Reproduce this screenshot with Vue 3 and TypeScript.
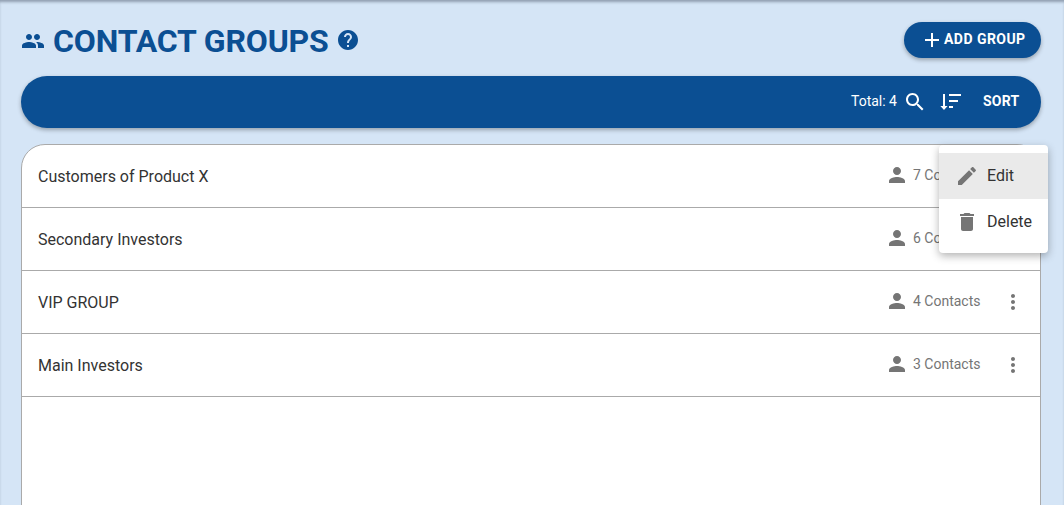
<script setup lang="ts">
interface Group { name: string; count: number }
const groups: Group[] = [
  { name: 'Customers of Product X', count: 7 },
  { name: 'Secondary Investors', count: 6 },
  { name: 'VIP GROUP', count: 4 },
  { name: 'Main Investors', count: 3 },
]
</script>

<template>
  <div class="page">
    <header class="head">
      <div class="title-wrap">
        <svg class="people" viewBox="0 0 24 24" width="24" height="24"><path fill="currentColor" d="M16 11c1.66 0 2.99-1.34 2.99-3S17.66 5 16 5c-1.66 0-3 1.34-3 3s1.34 3 3 3zm-8 0c1.66 0 2.99-1.34 2.99-3S9.66 5 8 5C6.34 5 5 6.34 5 8s1.34 3 3 3zm0 2c-2.33 0-7 1.17-7 3.5V19h14v-2.5c0-2.33-4.67-3.5-7-3.5zm8 0c-.29 0-.62.02-.97.05 1.16.84 1.97 1.97 1.97 3.45V19h6v-2.5c0-2.33-4.67-3.5-7-3.5z"/></svg>
        <h1>CONTACT GROUPS</h1>
        <svg class="help" viewBox="0 0 24 24" width="24" height="24"><path fill="currentColor" d="M12 2C6.48 2 2 6.48 2 12s4.48 10 10 10 10-4.48 10-10S17.52 2 12 2zm1 17h-2v-2h2v2zm2.07-7.75l-.9.92C13.45 12.9 13 13.5 13 15h-2v-.5c0-1.1.45-2.1 1.17-2.83l1.24-1.26c.37-.36.59-.86.59-1.41 0-1.1-.9-2-2-2s-2 .9-2 2H8c0-2.21 1.79-4 4-4s4 1.79 4 4c0 .88-.36 1.68-.93 2.25z"/></svg>
      </div>
      <button class="add">
        <svg viewBox="0 0 24 24" width="24" height="24"><path fill="currentColor" d="M19 13h-6v6h-2v-6H5v-2h6V5h2v6h6v2z"/></svg>
        <span>ADD GROUP</span>
      </button>
    </header>

    <div class="toolbar">
      <span class="total">Total: 4</span>
      <svg class="search" viewBox="0 0 24 24" width="24" height="24"><path fill="currentColor" d="M15.5 14h-.79l-.28-.27C15.41 12.59 16 11.11 16 9.5 16 5.91 13.09 3 9.5 3S3 5.91 3 9.5 5.91 16 9.5 16c1.61 0 3.09-.59 4.23-1.57l.27.28v.79l5 4.99L20.49 19l-4.99-5zm-6 0C7.01 14 5 11.99 5 9.5S7.01 5 9.5 5 14 7.01 14 9.5 11.99 14 9.5 14z"/></svg>
      <svg class="sort-icon" viewBox="0 0 24 24" width="24" height="24"><path fill="currentColor" d="M4 4h2v12h2.6L5 20 1.400 16H4V4zM10 4h12v2H10V4zm0 6h9v2h-9v-2zm0 6h4v2h-4v-2z"/></svg>
      <span class="sort">SORT</span>
    </div>

    <div class="list-wrap">
      <ul class="list">
        <li v-for="g in groups" :key="g.name" class="row">
          <span class="name">{{ g.name }}</span>
          <svg class="person" viewBox="0 0 24 24" width="24" height="24"><path fill="currentColor" d="M12 12c2.21 0 4-1.79 4-4s-1.79-4-4-4-4 1.79-4 4 1.79 4 4 4zm0 2c-2.67 0-8 1.34-8 4v2h16v-2c0-2.66-5.33-4-8-4z"/></svg>
          <span class="count">{{ g.count }} Contacts</span>
          <svg class="more" viewBox="0 0 24 24" width="24" height="24"><path fill="currentColor" d="M12 8c1.1 0 2-.9 2-2s-.9-2-2-2-2 .9-2 2 .9 2 2 2zm0 2c-1.1 0-2 .9-2 2s.9 2 2 2 2-.9 2-2-.9-2-2-2zm0 6c-1.1 0-2 .9-2 2s.9 2 2 2 2-.9 2-2-.9-2-2-2z"/></svg>
        </li>
      </ul>
      <div class="menu">
        <div class="item active">
          <svg viewBox="0 0 24 24" width="24" height="24"><path fill="currentColor" d="M3 17.25V21h3.75L17.81 9.94l-3.75-3.75L3 17.25zM20.71 7.04c.39-.39.39-1.02 0-1.41l-2.34-2.34c-.39-.39-1.02-.39-1.41 0l-1.83 1.83 3.75 3.75 1.83-1.83z"/></svg>
          <span>Edit</span>
        </div>
        <div class="item">
          <svg viewBox="0 0 24 24" width="24" height="24"><path fill="currentColor" d="M6 19c0 1.1.9 2 2 2h8c1.1 0 2-.9 2-2V7H6v12zM19 4h-3.5l-1-1h-5l-1 1H5v2h14V4z"/></svg>
          <span>Delete</span>
        </div>
      </div>
    </div>
  </div>
</template>

<style>
html, body { margin: 0; overflow: hidden; background: #d5e5f6; }
</style>

<style scoped>
.page {
  position: relative;
  height: 505px;
  box-sizing: border-box;
  padding: 0 23px 0 21px;
  background: #d5e5f6;
  font-family: Roboto, "Liberation Sans", sans-serif;
  overflow: hidden;
  box-shadow: inset 0 3px 3px -1px rgba(60, 70, 90, .45);
}
.head {
  height: 76px;
  display: flex;
  align-items: flex-start;
  justify-content: space-between;
}
.title-wrap {
  display: flex;
  align-items: center;
  height: 40px;
  margin-top: 21px;
  color: #0b4f93;
}
h1 {
  margin: 0 0 0 8px;
  font-size: 32px;
  font-weight: 700;
  line-height: 40px;
  letter-spacing: -.15px;
}
.help { margin: 0 0 2px 7px; }
.add {
  margin-top: 22px;
  width: 137px;
  height: 36px;
  padding: 0 0 0 16px;
  display: flex;
  align-items: center;
  border: 0;
  border-radius: 18px;
  background: #0b4f93;
  color: #fff;
  font: 700 14px/36px Roboto, sans-serif;
  letter-spacing: .45px;
  box-shadow: 0 2px 4px rgba(0, 0, 0, .3);
}
.add span { padding-bottom: 2px; line-height: 34px; }
.toolbar {
  height: 52px;
  display: flex;
  align-items: center;
  justify-content: flex-end;
  padding-right: 22px;
  border-radius: 26px;
  background: #0b4f93;
  color: #fff;
  box-shadow: 0 2px 4px rgba(0, 0, 0, .3);
}
.total { font-size: 14px; padding-bottom: 2px; }
.search { margin-left: 6px; }
.sort-icon { margin-left: 12px; }
.sort { margin-left: 20px; font-size: 14px; font-weight: 700; letter-spacing: .25px; padding-bottom: 2px; width: 36px; white-space: nowrap; }
.list-wrap { position: relative; margin-top: 16px; }
.list {
  margin: 0;
  padding: 0;
  list-style: none;
  height: 400px;
  background: #fff;
  border: 1px solid #aaa;
  border-radius: 24px 24px 0 0;
  box-sizing: border-box;
}
.row {
  height: 63px;
  box-sizing: border-box;
  display: flex;
  align-items: center;
  padding: 0 15px 0 16px;
  border-bottom: 1px solid #aaa;
  color: #757575;
}
.name { flex: 1; font-size: 16px; color: #333; }
.person { margin-bottom: 2px; }
.count { margin-left: 4px; font-size: 14px; width: 80px; padding-bottom: 2px; }
.more { margin-left: 8px; }
.menu {
  position: absolute;
  top: 1px;
  left: 918px;
  width: 109px;
  padding: 8px 0;
  background: #fff;
  border-radius: 4px;
  box-shadow: 0 3px 8px rgba(0, 0, 0, .3);
}
.item {
  height: 46px;
  display: flex;
  align-items: center;
  padding-left: 16px;
  color: #757575;
}
.item span { margin-left: 8px; font-size: 16px; color: #333; padding-bottom: 2px; }
.active { background: #eaeaea; }
</style>
